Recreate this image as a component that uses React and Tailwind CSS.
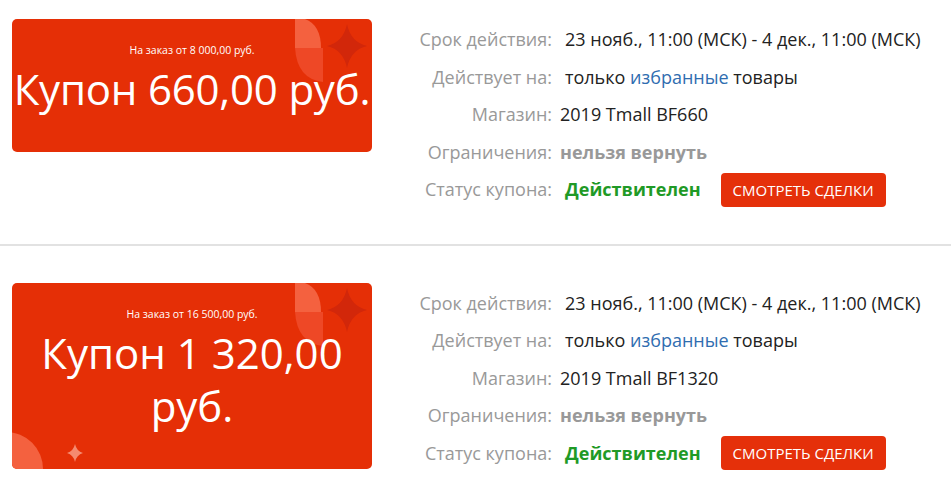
import React from "react";

function star(cx, cy, rx, ry, k = 0.18) {
  const dx = rx * k;
  const dy = ry * k;
  return `M${cx} ${cy - ry} Q${cx + dx} ${cy - dy} ${cx + rx} ${cy} Q${cx + dx} ${cy + dy} ${cx} ${cy + ry} Q${cx - dx} ${cy + dy} ${cx - rx} ${cy} Q${cx - dx} ${cy - dy} ${cx} ${cy - ry} Z`;
}

function TopDeco() {
  return (
    <svg className="absolute right-0 top-0" width="89" height="66" viewBox="0 0 89 66">
      <path d="M12 0 H22 Q38 6 38 29 H12 Z" fill="#f4613f" />
      <path d="M12 29 H40 V63 Q14 60 12 29 Z" fill="#ee4826" />
      <path d={star(64, 27, 20, 22)} fill="#d2270a" />
    </svg>
  );
}

function BottomDeco() {
  return (
    <svg className="absolute left-0 bottom-0" width="80" height="40" viewBox="0 0 80 40">
      <circle cx="-6" cy="40" r="37" fill="#f4613f" />
      <path d={star(63, 24, 8, 9, 0.2)} fill="#f58a70" />
    </svg>
  );
}

function Coupon({ min, amount, bottom, nowrap }) {
  return (
    <div className="relative min-h-[133px] w-[360px] shrink-0 overflow-hidden rounded-[5px] bg-[#e52f06] pt-[24px] pb-[37px] text-center text-white">
      <TopDeco />
      {bottom && <BottomDeco />}
      <div className="relative text-[10.5px] leading-[14px]">{min}</div>
      <div
        className={`relative mt-[5px] text-[42px] leading-[53px] ${nowrap ? "-mx-[10px] whitespace-nowrap tracking-[-0.2px]" : ""}`}
      >
        {amount}
      </div>
    </div>
  );
}

function Row({ label, children, pl }) {
  return (
    <div className="flex h-[37.5px] items-center">
      <div className="w-[152px] shrink-0 text-right text-[#999]">{label}</div>
      <div className={`flex items-center ${pl ? "pl-[13px]" : "pl-[8px]"} text-[#222]`}>{children}</div>
    </div>
  );
}

function Section({ min, amount, store, bottom, nowrap, className }) {
  return (
    <div className={`flex items-start px-3 ${className}`}>
      <Coupon min={min} amount={amount} bottom={bottom} nowrap={nowrap} />
      <div className="ml-[28px] mt-[2px] flex flex-col text-[18px]">
        <Row label="Срок действия:" pl>23 нояб., 11:00 (МСК) - 4 дек., 11:00 (МСК)</Row>
        <Row label="Действует на:" pl>
          <span>
            только <span className="text-[#2f6db0]">избранные</span> товары
          </span>
        </Row>
        <Row label="Магазин:">2019 Tmall {store}</Row>
        <Row label="Ограничения:">
          <span className="font-bold text-[#999]">нельзя вернуть</span>
        </Row>
        <Row label="Статус купона:" pl>
          <span className="font-bold text-[#1f9a26]">Действителен</span>
          <button className="ml-[20px] flex h-[34px] w-[165px] items-center justify-center rounded-[4px] bg-[#e5300a] text-[15px] text-white">
            СМОТРЕТЬ СДЕЛКИ
          </button>
        </Row>
      </div>
    </div>
  );
}

export default function App() {
  return (
    <div className="h-[497px] w-[951px] overflow-hidden bg-white font-['Open_Sans',sans-serif]">
      <Section
        className="pt-[19px] pb-[35px]"
        min="На заказ от 8 000,00 руб."
        amount="Купон 660,00 руб."
        store="BF660"
        nowrap
      />
      <div className="h-[2px] w-full bg-[#e2e2e2]" />
      <Section
        className="pt-[37px]"
        min="На заказ от 16 500,00 руб."
        amount="Купон 1 320,00 руб."
        store="BF1320"
        bottom
      />
    </div>
  );
}
